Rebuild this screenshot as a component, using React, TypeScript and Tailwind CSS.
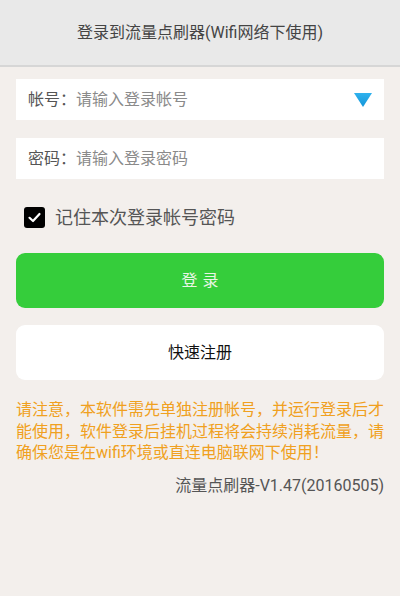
import { useState } from 'react';

const font = { fontFamily: "Roboto, 'Noto Sans CJK SC', 'Noto Sans', sans-serif" };

// centred full-width punctuation, as the phone font draws it
const P = ({ c }: { c: string }) => (
  <span className="inline-block w-[1em] text-center leading-none">{c}</span>
);

export default function App() {
  const [remember, setRemember] = useState(true);
  return (
    <div className="w-[400px] h-[596px] bg-[#f3efec] flex flex-col" style={font}>
      {/* title bar */}
      <div className="h-[67px] bg-[#e9e9e9] border-b-2 border-[#d6d6d6] flex items-center justify-center">
        <span className="text-[16px] text-[#444444] leading-none">登录到流量点刷器(Wifi网络下使用)</span>
      </div>

      <div className="px-4 flex flex-col">
        <div className="mt-[12px] h-[41px] bg-white flex items-center pl-3 pr-[10px]">
          <span className="text-[16px] text-[#555555]">帐号<P c="：" /></span>
          <span className="text-[16px] text-[#8a8a8a] flex-1">请输入登录帐号</span>
          <svg width="20" height="17" viewBox="0 0 20 17" className="mr-[1px]">
            <defs>
              <linearGradient id="tri" x1="0" y1="0" x2="0" y2="1">
                <stop offset="0" stopColor="#2fb2ee" />
                <stop offset="1" stopColor="#1495d8" />
              </linearGradient>
            </defs>
            <polygon points="1,2 19,2 10,16" fill="url(#tri)" />
          </svg>
        </div>

        <div className="mt-[18px] h-[41px] bg-white flex items-center pl-3">
          <span className="text-[16px] text-[#555555]">密码<P c="：" /></span>
          <span className="text-[16px] text-[#8a8a8a]">请输入登录密码</span>
        </div>

        <label className="mt-[28px] h-[21px] flex items-center pl-2 cursor-pointer" onClick={() => setRemember(!remember)}>
          <span className="w-[21px] h-[21px] rounded-[3px] bg-black flex items-center justify-center">
            {remember && (
              <svg width="15" height="15" viewBox="0 0 15 15">
                <path d="M2.5 7.8 L6 11 L12.5 4" stroke="white" strokeWidth="2.2" fill="none" strokeLinecap="round" strokeLinejoin="round" />
              </svg>
            )}
          </span>
          <span className="ml-[10px] text-[18px] text-[#555555] leading-none">记住本次登录帐号密码</span>
        </label>

        <button className="mt-[25px] h-[55px] rounded-[9px] bg-[#35cd3b] text-[#e8f6e4] text-[16px] tracking-[5px] pl-[5px]">
          登录
        </button>

        <button className="mt-[17px] h-[55px] rounded-[9px] bg-white text-[#111111] text-[16px]">
          快速注册
        </button>

        <p className="mt-[19px] mr-[-4px] text-[16px] leading-[21.5px] text-[#f0a020]">
          请注意<P c="，" />本软件需先单独注册帐号<P c="，" />并运行登录后才能使用<P c="，" />软件登录后挂机过程将会持续消耗流量<P c="，" />请确保您是在wifi环境或直连电脑联网下使用<P c="！" />
        </p>

        <div className="mt-[12px] text-right text-[16px] leading-[20px] text-[#555555]">
          流量点刷器-V1.47(20160505)
        </div>
      </div>
    </div>
  );
}
